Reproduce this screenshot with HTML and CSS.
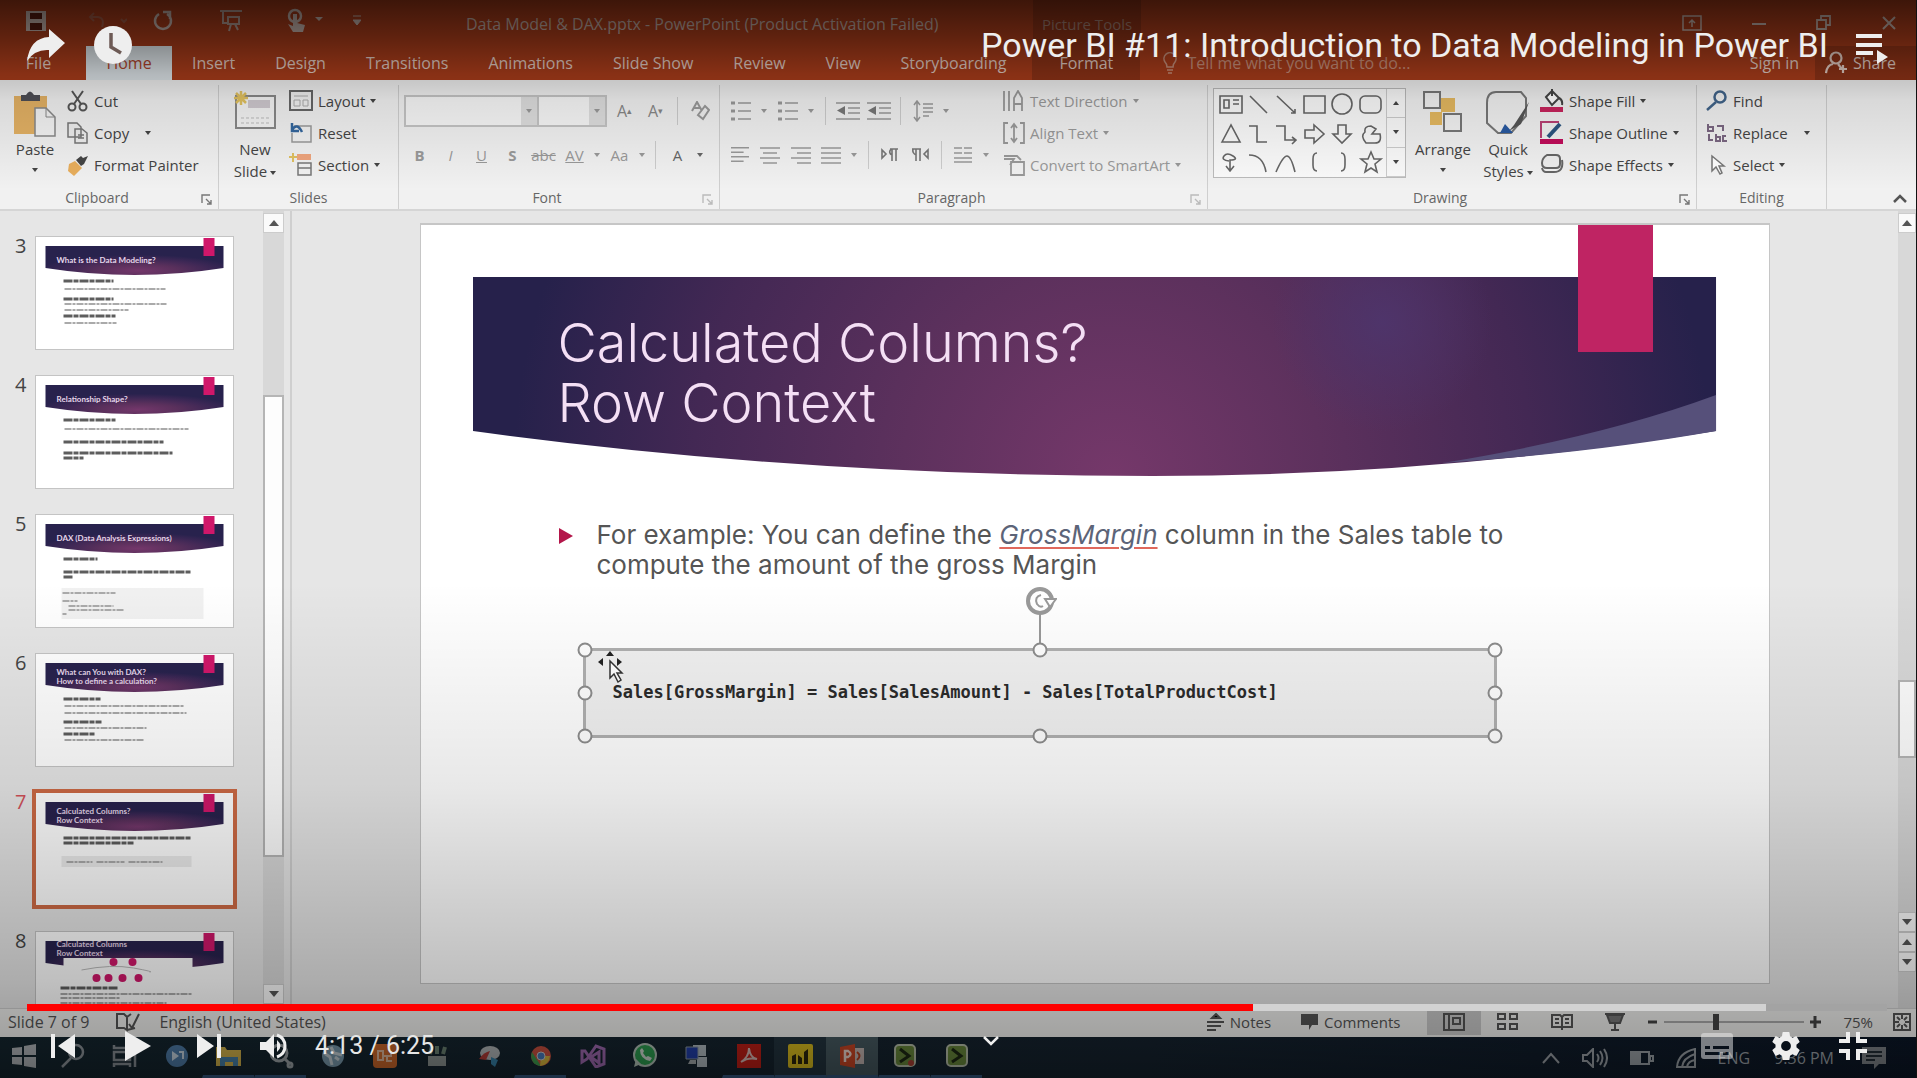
FILE: index.html
```html
<!DOCTYPE html>
<html lang="en">
<head>
<meta charset="utf-8">
<title>Power BI #11: Introduction to Data Modeling in Power BI</title>
<link rel="stylesheet" href="styles.css">
</head>
<body>
<svg class="defs" aria-hidden="true">
  <defs>
    <radialGradient id="plum" cx="0.52" cy="0.85" r="0.55">
      <stop offset="0" stop-color="#74376b"/><stop offset="0.4" stop-color="#5a305c"/><stop offset="0.75" stop-color="#3c2755"/><stop offset="1" stop-color="#28224d"/>
    </radialGradient>
    <radialGradient id="wide" gradientUnits="userSpaceOnUse" cx="640" cy="200" r="600">
      <stop offset="0" stop-color="#75386a"/><stop offset="0.35" stop-color="#5d315d"/><stop offset="0.7" stop-color="#432854"/><stop offset="1" stop-color="#26214b"/>
    </radialGradient>
    <radialGradient id="glow" gradientUnits="userSpaceOnUse" cx="910" cy="45" r="110">
      <stop offset="0" stop-color="#4e356c" stop-opacity=".9"/><stop offset="1" stop-color="#4e356c" stop-opacity="0"/>
    </radialGradient>
    <symbol id="mini" viewBox="0 0 196 112">
      <path d="M9 9H187V31Q98 45 9 31Z" fill="url(#plum)"/>
      <path d="M167 1h11v18h-11z" fill="#d0176a"/>
    </symbol>
    <symbol id="launch" viewBox="0 0 12 12"><path d="M1 9V1h8M5 5l5 5M10 6v4H6" fill="none" stroke="currentColor" stroke-width="1.4"/></symbol>
    <symbol id="lines" viewBox="0 0 20 20"><path d="M0 2h20M0 7h14M0 12h20M0 17h14" stroke="currentColor" stroke-width="1.6"/></symbol>
    <symbol id="bullets" viewBox="0 0 20 22"><path d="M0 3h4M0 11h4M0 19h4" stroke="currentColor" stroke-width="3"/><path d="M7 3h13M7 11h13M7 19h13" stroke="currentColor" stroke-width="1.6"/></symbol>
    <symbol id="indent" viewBox="0 0 24 20"><path d="M0 2h24M12 7h12M12 12h12M0 18h24" stroke="currentColor" stroke-width="1.6"/><path d="M9 5v9L1 9.500z" fill="#777"/></symbol>
  </defs>
</svg>
<main class="player">
<section class="frame" aria-label="PowerPoint window">
  <header class="titlebar">
    <div class="quick">
      <button aria-label="Save"><svg width="22" height="22"><path d="M1 1h20v20H1z" fill="#c9b5ae"/><path d="M5 3h12v6H5zM5 13h12v7H5z" fill="#571b0f"/></svg></button>
      <button aria-label="Undo"><svg width="40" height="20" fill="none" stroke="#a25a44" stroke-width="2"><path d="M3 6h8q7 1 4 10M7 2L3 6l4 4M34 8l3 3 3-3"/></svg></button>
      <button aria-label="Redo"><svg width="20" height="22" fill="none" stroke="#c9b5ae" stroke-width="2.500"><path d="M6 4a8 8 0 1 0 8 0M10 2h7v7"/></svg></button>
      <button aria-label="Slide show"><svg width="24" height="24" fill="none" stroke="#b59c93" stroke-width="2"><path d="M1 2h22M4 2v12h5M9 8h11v7H9zM12 15l-2 7M16 15l3 6"/></svg></button>
      <button aria-label="Touch mode"><svg width="38" height="26"><circle cx="10" cy="8" r="6" fill="none" stroke="#c9b5ae" stroke-width="2.500"/><path d="M8 6h4v9l8 2-2 7H8l-5-8 5 2z" fill="#c9b5ae"/><path d="M30 9h8l-4 4z" fill="#c9b5ae"/></svg></button>
      <button aria-label="Customize"><svg width="8" height="14"><path d="M0 2h8M0 6h8l-4 5z" fill="#c9b5ae" stroke="#c9b5ae"/></svg></button>
    </div>
    <p class="doc">Data Model &amp; DAX.pptx - PowerPoint (Product Activation Failed)</p>
    <p class="tools">Picture Tools</p>
    <div class="winbtns">
      <button aria-label="Ribbon options"><svg width="20" height="16" fill="none" stroke="#c9b5ae" stroke-width="1.500"><path d="M1 1h18v14H1zM10 12V5M7 8l3-3 3 3"/></svg></button>
      <button aria-label="Minimize"><svg width="14" height="16"><path d="M0 9h14" stroke="#c9b5ae" stroke-width="2"/></svg></button>
      <button aria-label="Restore"><svg width="16" height="16" fill="none" stroke="#c9b5ae" stroke-width="1.800"><path d="M1 5h9v9H1zM5 5V1h9v9h-4"/></svg></button>
      <button aria-label="Close"><svg width="14" height="14"><path d="M1 1l12 12M13 1L1 13" stroke="#c9b5ae" stroke-width="2"/></svg></button>
    </div>
  </header>
  <nav class="tabs">
    <button class="file">File</button><button class="home">Home</button><button>Insert</button><button>Design</button><button>Transitions</button><button>Animations</button><button>Slide Show</button><button>Review</button><button>View</button><button>Storyboarding</button><button class="format">Format</button>
    <button class="tell"><svg width="16" height="22" fill="none" stroke="currentColor" stroke-width="1.600"><path d="M5 15q0-3-2-5a6 6 0 1 1 10 0q-2 2-2 5zM5 18h6M6 21h4"/></svg>Tell me what you want to do...</button>
    <button class="signin">Sign in</button>
    <button class="share"><svg width="22" height="24" fill="none" stroke="currentColor" stroke-width="2.200"><circle cx="11" cy="7" r="5.500"/><path d="M1 22q1-8 7-9M13 13l4 5M18 14v8M14 18h8"/></svg>Share</button>
  </nav>

  <div class="ribbon">
    <section class="group clip">
      <div class="body">
        <button class="big"><svg width="44" height="46"><path d="M1 5h33v38H1z" fill="#e3b164"/><path d="M8 10V4h5q4-7 8 0h6v6z" fill="#4e4e55"/><path d="M22 17h11l9 9v19H22z" fill="#f3f3f3" stroke="#888" stroke-width="1.500"/><path d="M33 17v9h9" fill="none" stroke="#888"/></svg><span>Paste</span><i></i></button>
        <div class="stack">
          <button><svg width="22" height="22" fill="none" stroke="#555" stroke-width="2"><path d="M5 1l9 13M16 1L7 14"/><circle cx="5" cy="17" r="3.500"/><circle cx="16" cy="17" r="3.500"/></svg>Cut</button>
          <button><svg width="22" height="22" fill="#eee" stroke="#777" stroke-width="1.500"><path d="M1 1h9l4 4v10H1zM8 7h7l5 4v10H8z"/><path d="M11 13h6M11 16h6"/></svg>Copy<i class="far"></i></button>
          <button><svg width="22" height="22"><path d="M2 10l6-3 7 7-8 8-6-5z" fill="#e8ae5c"/><path d="M9 6l5 6 3-2 4-8-5 2-2-2z" fill="#444"/></svg>Format Painter</button>
        </div>
      </div>
      <h2>Clipboard</h2><button class="launch" aria-label="Clipboard options"><svg><use href="#launch"/></svg></button>
    </section>
    <section class="group slides">
      <div class="body">
        <button class="big"><svg width="44" height="40"><path d="M3 5h39v32H3z" fill="#f4f4f4" stroke="#888" stroke-width="2"/><path d="M15 9h22v8H15z" fill="#cfc9cf"/><path d="M8 27h30M8 32h30" stroke="#bbb" stroke-dasharray="3 2"/><path d="M8 0v14M1 7h14M3 2l10 10M13 2L3 12" stroke="#e2c25f" stroke-width="2.500"/></svg><span>New</span><span>Slide<i></i></span></button>
        <div class="stack">
          <button><svg width="24" height="22" fill="none" stroke="#666" stroke-width="2"><path d="M1 1h22v19H1z"/><path d="M5 6h14M5 10h6v6H5zM14 10h5v6h-5z" stroke="#aaa" stroke-width="1"/></svg>Layout<i></i></button>
          <button><svg width="24" height="22" fill="none"><path d="M5 4h17v16H3V11" stroke="#999" stroke-width="1.500"/><path d="M3 8q5-8 10 2M3 1v8h7" stroke="#33669d" stroke-width="2.500"/></svg>Reset</button>
          <button><svg width="24" height="24" fill="none"><path d="M8 1h14v6H8z" fill="#efa57e"/><path d="M9 10h13v12H9zM9 15h13" stroke="#777" stroke-width="1.500"/><path d="M4 0v9M0 4h8" stroke="#e0c060" stroke-width="2"/></svg>Section<i></i></button>
        </div>
      </div>
      <h2>Slides</h2>
    </section>
    <section class="group font">
      <div class="body rows">
        <div class="line top">
          <label class="combo face"><select aria-label="Font"><option></option></select><i></i></label><label class="combo size"><select aria-label="Font size"><option></option></select><i></i></label>
          <button class="tb grow">A<sup>▴</sup></button><button class="tb grow">A<sup>▾</sup></button><b class="sep"></b>
          <button class="tb" aria-label="Clear formatting"><svg width="20" height="20" fill="none" stroke="currentColor" stroke-width="2"><path d="M2 10L7 1l5 9M4 7h6M8 14l7-9 4 4-6 9z"/></svg></button>
        </div>
        <div class="line">
          <button class="tb"><strong>B</strong></button><button class="tb"><em>I</em></button><button class="tb"><u>U</u></button><button class="tb"><strong>S</strong></button><button class="tb"><s>abc</s></button><button class="tb"><u>AV</u></button><button class="dd" aria-label="Spacing"><i></i></button><button class="tb">Aa</button><button class="dd" aria-label="Case"><i></i></button><b class="sep"></b><button class="tb dark">A</button><button class="dd dark" aria-label="Colour"><i></i></button>
        </div>
      </div>
      <h2>Font</h2><button class="launch pale" aria-label="Font options"><svg><use href="#launch"/></svg></button>
    </section>
    <section class="group para">
      <div class="body">
        <div class="rows">
          <div class="line top">
            <button class="tb" aria-label="Bullets"><svg width="20" height="22"><use href="#bullets"/></svg></button><button class="dd" aria-label="Bullet styles"><i></i></button><button class="tb" aria-label="Numbering"><svg width="20" height="22"><use href="#bullets"/></svg></button><button class="dd" aria-label="Number styles"><i></i></button><b class="sep"></b><button class="tb" aria-label="Outdent"><svg width="24" height="20"><use href="#indent"/></svg></button><button class="tb" aria-label="Indent"><svg width="24" height="20"><use href="#indent"/></svg></button><b class="sep"></b><button class="tb" aria-label="Line spacing"><svg width="20" height="22"><path d="M4 2v18M1 5l3-4 3 4M1 17l3 4 3-4M10 4h10M10 8h10M10 12h10M10 16h6" fill="none" stroke="currentColor" stroke-width="1.500"/></svg></button><button class="dd" aria-label="Spacing options"><i></i></button>
          </div>
          <div class="line">
            <button class="tb" aria-label="Left"><svg width="20" height="18"><use href="#lines"/></svg></button><button class="tb" aria-label="Centre"><svg width="20" height="18" stroke="currentColor" stroke-width="1.600"><path d="M0 2h20M3 7h14M0 12h20M3 17h14"/></svg></button><button class="tb" aria-label="Right"><svg width="20" height="18" stroke="currentColor" stroke-width="1.600"><path d="M0 2h20M6 7h14M0 12h20M6 17h14"/></svg></button><button class="tb" aria-label="Justify"><svg width="20" height="18" stroke="currentColor" stroke-width="1.600"><path d="M0 2h20M0 7h20M0 12h20M0 17h20"/></svg></button><button class="dd" aria-label="Justify options"><i></i></button><b class="sep"></b><button class="tb" aria-label="Left to right"><svg width="18" height="16" fill="none" stroke="#777" stroke-width="1.600"><path d="M1 3v8l4-4zM9 2h8M11 2v12M15 2v12M11 8q-4-2-1-6"/></svg></button><button class="tb" aria-label="Right to left"><svg width="18" height="16" fill="none" stroke="#777" stroke-width="1.600"><path d="M17 3v8l-4-4zM1 2h9M5 2v12M9 2v12M5 8q-4-2-3-6"/></svg></button><b class="sep"></b><button class="tb" aria-label="Columns"><svg width="18" height="16" stroke="currentColor" stroke-width="1.600"><path d="M0 1h8M10 1h8M0 6h8M10 6h8M0 11h18M0 15h18"/></svg></button><button class="dd" aria-label="Column options"><i></i></button>
          </div>
        </div>
        <div class="stack">
          <button><svg width="22" height="22" fill="none" stroke="currentColor" stroke-width="1.800"><path d="M1 1v20M6 1v20M11 21V8l4-7 4 7v13M11 14h8"/></svg>Text Direction<i></i></button>
          <button><svg width="22" height="22" fill="none" stroke="currentColor" stroke-width="1.800"><path d="M5 1H1v20h4M17 1h4v20h-4M11 3v16M8 6l3-4 3 4M8 16l3 4 3-4"/></svg>Align Text<i></i></button>
          <button><svg width="22" height="22" fill="none" stroke="currentColor" stroke-width="1.800"><path d="M8 8h13v13H8zM1 2h13l4 4M1 5h10l-4 6"/></svg>Convert to SmartArt<i></i></button>
        </div>
      </div>
      <h2>Paragraph</h2><button class="launch pale" aria-label="Paragraph options"><svg><use href="#launch"/></svg></button>
    </section>
    <section class="group draw">
      <div class="body">
        <div class="gallery">
          <svg width="172" height="86" fill="none" stroke="#666" stroke-width="1.600">
            <path d="M6 7h22v17H6zM10 11h5v8h-5zM19 11h6M19 15h6M36 7l17 17M63 7l18 17M77 24h4v-4M90 7h21v17H90z"/><circle cx="128" cy="15" r="10"/><rect x="146" y="7" width="21" height="17" rx="5"/>
            <path d="M8 53l9-17 9 17zM35 37h8v16h10M62 37h9v14h11M78 48l4 3-4 4M91 41h9v-5l10 9-10 9v-5h-9zM124 36h8v9h5l-9 9-9-9h5zM166 45q2 9-5 9h-9q-6-7-1-11-1-6 6-6l5 3-4 5z"/>
            <path d="M15 72q-8-1-5-5t9 0-3 4v11M12 77l4 5 4-5M35 66q14 0 17 17M62 83q7-16 11-16t8 16M103 64q-4 0-4 6v6q0 6 4 6M127 64q4 0 4 6v6q0 6-4 6M157 63l3 7h7l-6 5 2 8-6-4-6 4 2-8-6-5h7z"/>
          </svg>
          <div class="gscroll"><button aria-label="Up"><i class="up"></i></button><button aria-label="Down"><i></i></button><button aria-label="More"><i></i></button></div>
        </div>
        <button class="big arrange"><svg width="40" height="42"><path d="M18 7h14v14H18zM7 21h12v13H7z" fill="#e4b860"/><path d="M1 1h16v16H1zM21 23h17v17H21z" fill="#f2f2f2" stroke="#777" stroke-width="2"/></svg><span>Arrange</span><i></i></button>
        <button class="big"><svg width="44" height="46"><path d="M1 12Q1 1 10 1h25l5 6v18L25 42H12L1 32z" fill="#f1f1f1" stroke="#777" stroke-width="2"/><path d="M43 11L28 34l-5 6 12-7z" fill="#555"/><path d="M14 42l5-9 8 9z" fill="#2959a0"/></svg><span>Quick</span><span>Styles<i></i></span></button>
        <div class="stack">
          <button><svg width="24" height="24"><path d="M6 8l6-6 7 7-7 7zM12 0v7M19 9q4 2 3 7" fill="#fff" stroke="#444" stroke-width="2"/><path d="M0 18h23v5H0z" fill="#c7245c"/></svg>Shape Fill<i></i></button>
          <button><svg width="24" height="24"><path d="M1 17V1h18" fill="none" stroke="#b84073" stroke-width="2"/><path d="M20 3L8 16" stroke="#2c5580" stroke-width="4"/><path d="M0 18h23v5H0z" fill="#c00d5a"/></svg>Shape Outline<i></i></button>
          <button><svg width="24" height="22" fill="#eee" stroke="#666" stroke-width="2"><path d="M7 1h9q4 0 4 4v5q0 4-4 4H7q-5 0-5-5t5-8z"/><path d="M22 6q2 12-8 12H6q-3 0-4-4" fill="none"/></svg>Shape Effects<i></i></button>
        </div>
      </div>
      <h2>Drawing</h2><button class="launch" aria-label="Drawing options"><svg><use href="#launch"/></svg></button>
    </section>
    <section class="group edit">
      <div class="body">
        <div class="stack">
          <button><svg width="22" height="22" fill="none" stroke="#41648a" stroke-width="2.500"><circle cx="14" cy="7" r="5.500"/><path d="M10 12l-9 8"/></svg>Find</button>
          <button><svg width="22" height="22" fill="none" stroke="#7b6782" stroke-width="2"><path d="M2 2v7h5V5H2M11 4h6v5M10 12v7h4v-4h-4M20 14h-3v5h4M3 12v6h4"/></svg>Replace<i class="far"></i></button>
          <button><svg width="22" height="22" fill="#fff" stroke="#777" stroke-width="1.500"><path d="M6 2v15l4-4 4 7 2-1-3-7h5z"/></svg>Select<i></i></button>
        </div>
      </div>
      <h2>Editing</h2>
    </section>
    <button class="collapse" aria-label="Collapse ribbon"><svg width="14" height="9"><path d="M1 8l6-6 6 6" fill="none" stroke="#555" stroke-width="2.500"/></svg></button>
  </div>

  <div class="work">
    <ol class="thumbs" start="3">
      <li><span>3</span><button class="thumb"><svg viewBox="0 0 196 112"><use href="#mini"/><text x="20" y="26">What is the Data Modeling?</text><g class="k"><path d="M27 44h50M27 62h50M27 79h52"/></g><g class="g"><path d="M28 52h101M28 67h102M28 73h64M28 86h52"/></g></svg></button></li>
      <li><span>4</span><button class="thumb"><svg viewBox="0 0 196 112"><use href="#mini"/><text x="20" y="26">Relationship Shape?</text><g class="k"><path d="M27 44h52M27 66h100M27 77h109M27 82h20"/></g><g class="g"><path d="M28 53h124"/></g></svg></button></li>
      <li><span>5</span><button class="thumb"><svg viewBox="0 0 196 112"><use href="#mini"/><text x="20" y="26">DAX (Data Analysis Expressions)</text><path d="M25 73h142v31H25z" fill="#f1f1f1"/><g class="k"><path d="M27 44h34M27 57h127M27 62h9"/></g><g class="g"><path d="M26 78h53M26 86h15M32 91h45M32 95h55M26 99h4"/></g></svg></button></li>
      <li><span>6</span><button class="thumb"><svg viewBox="0 0 196 112"><use href="#mini"/><text x="20" y="21">What can You with DAX?</text><text x="20" y="30">How to define a calculation?</text><g class="k"><path d="M27 45h37M27 68h38M27 80h31"/></g><g class="g"><path d="M28 52h119M28 59h122M28 74h82M28 86h80"/></g></svg></button></li>
      <li class="on"><span>7</span><button class="thumb"><svg viewBox="0 0 196 112"><use href="#mini"/><text x="20" y="21">Calculated Columns?</text><text x="20" y="30">Row Context</text><path d="M25 63h130v11H25z" fill="#ececec"/><g class="k"><path d="M27 45h128M27 50h70"/></g><g class="g"><path d="M30 69h26M60 69h28M92 69h34"/></g></svg></button></li>
      <li><span>8</span><button class="thumb"><svg viewBox="0 0 196 112"><use href="#mini"/><path d="M27 26h129v24H27z" fill="#fff"/><text x="20" y="15">Calculated Columns</text><text x="20" y="24">Row Context</text><path d="M45 38q30-6 52-2t16 4" fill="none" stroke="#bbb"/><g fill="#d0176a"><circle cx="77" cy="30" r="4"/><circle cx="96" cy="30" r="4"/><circle cx="60" cy="46" r="4"/><circle cx="72" cy="46" r="4"/><circle cx="86" cy="46" r="4"/><circle cx="102" cy="46" r="4"/></g><g class="k"><path d="M24 56h58"/></g><g class="g"><path d="M24 62h132M24 66h60M24 71h106"/></g></svg></button></li>
    </ol>
    <div class="vscroll left"><button aria-label="Scroll up"><i class="up"></i></button><span class="gap"></span><span class="grip"></span><span class="rest"></span><button aria-label="Scroll down"><i></i></button></div>
    <div class="stage">
      <article class="slide">
        <svg class="ribbon-mark" viewBox="0 0 75 127" aria-hidden="true"><path d="M0 0h75v127H0z" fill="#bf2463"/></svg>
        <header class="banner">
          <svg viewBox="0 0 1244 200" preserveAspectRatio="none" aria-hidden="true"><path d="M0 0H1244V154Q960 199 680 199Q330 199 0 154Z" fill="url(#wide)"/><path d="M0 0H1244V154Q960 199 680 199Q330 199 0 154Z" fill="url(#glow)"/><path d="M970 186Q1130 160 1244 118V154Q1120 176 970 186Z" fill="#56507a"/></svg>
          <h1>Calculated Columns?<br>Row Context</h1>
        </header>
        <ul class="points"><li>For example: You can define the <em>GrossMargin</em> column in the Sales table to compute the amount of the gross Margin</li></ul>
        <div class="picked">
          <code>Sales[GrossMargin] = Sales[SalesAmount] - Sales[TotalProductCost]</code>
          <svg class="rot" width="34" height="56" fill="none" stroke="#999"><path d="M17 26v30" stroke-width="2"/><circle cx="17" cy="14" r="12" stroke="#999" stroke-width="4" fill="#fff"/><path d="M18 8q-7 2-4 9 3 4 6 2" stroke-width="2"/><path d="M22 12h11l-6 8z" fill="#fff" stroke-width="2"/></svg>
          <b class="h tl"></b><b class="h tc"></b><b class="h tr"></b><b class="h ml"></b><b class="h mr"></b><b class="h bl"></b><b class="h bc"></b><b class="h br"></b>
          <svg class="cursor" width="28" height="34"><path d="M12 10v17l4-4 4 8 3-2-4-7h5z" fill="#fff" stroke="#333" stroke-width="1.500"/><path d="M12 0l4 5H8zM0 11l5-4v8zM24 11l-5-4v8z" fill="#222"/></svg>
        </div>
      </article>
    </div>
    <div class="vscroll right"><button aria-label="Previous"><i class="up"></i></button><span class="gap"></span><span class="grip"></span><span class="rest"></span><button aria-label="Next"><i></i></button><button aria-label="Previous slide"><i class="up"></i></button><button aria-label="Next slide"><i></i></button></div>
  </div>

  <footer class="status">
    <span>Slide 7 of 9</span>
    <svg class="spell" width="24" height="20" fill="none" stroke="#555" stroke-width="2"><path d="M1 2h7l3 3v13l-3-2H1zM11 5l4-3M13 12l3 4 7-14M11 18l8-2"/></svg>
    <span class="lang">English (United States)</span>
    <button class="notes"><svg width="17" height="18" stroke="#555" stroke-width="2"><path d="M5 5l4-4 4 4zM0 9h17M0 13h14M0 17h9"/></svg>Notes</button>
    <button class="comments"><svg width="17" height="18"><path d="M0 1h17v11h-6l-3 5v-5H0z" fill="#555"/></svg>Comments</button>
    <div class="views">
      <button class="on" aria-label="Normal"><svg width="22" height="18" fill="none" stroke="#555" stroke-width="2"><path d="M1 1h20v16H1zM6 1v16M10 5h7v6h-7z"/></svg></button>
      <button aria-label="Sorter"><svg width="22" height="18" fill="none" stroke="#555" stroke-width="2"><path d="M1 1h7v5H1zM13 1h7v5h-7zM1 11h7v5H1zM13 11h7v5h-7z"/></svg></button>
      <button aria-label="Reading"><svg width="22" height="18" fill="none" stroke="#555" stroke-width="2"><path d="M1 2h8l2 2 2-2h8v12H1zM11 4v13M4 6h4M4 10h4M14 6h4M14 10h4"/></svg></button>
      <button aria-label="Slide show"><svg width="22" height="18" fill="#777" stroke="#555" stroke-width="2"><path d="M0 1h20M2 2h16l-3 8H5zM10 10v6M6 17h8"/></svg></button>
    </div>
    <button class="zoombtn" aria-label="Zoom out"><svg width="12" height="12"><path d="M1 6h9" stroke="#444" stroke-width="3"/></svg></button>
    <input class="zoom" type="range" min="10" max="190" value="75" aria-label="Zoom">
    <button class="zoombtn" aria-label="Zoom in"><svg width="12" height="12"><path d="M1 6h11M6 0v12" stroke="#444" stroke-width="3"/></svg></button>
    <span class="pct">75%</span>
    <button class="fit" aria-label="Fit"><svg width="18" height="18" fill="none" stroke="#555" stroke-width="2"><path d="M1 1h16v16H1zM9 2v4M9 12v4M2 9h4M12 9h4M4 4l3 3M14 4l-3 3M4 14l3-3M14 14l-3-3"/></svg></button>
  </footer>

  <footer class="taskbar">
    <div class="apps">
      <button aria-label="Start"><svg width="24" height="24" fill="#b0b4b8"><path d="M0 4l10-1v8H0zM12 2l12-2v11H12zM0 13h10v8L0 20zM12 13h12v11l-12-2z"/></svg></button>
      <button aria-label="Search"><svg width="26" height="26" fill="none" stroke="#8b9298" stroke-width="2.500"><circle cx="16" cy="9" r="7"/><path d="M11 15L2 24"/></svg></button>
      <button aria-label="Task view"><svg width="26" height="24" fill="none" stroke="#858c92" stroke-width="2.500"><path d="M2 1v3h16V1M2 8h16v8H2zM2 23v-3h16v3M23 1v22"/></svg></button>
      <button aria-label="Help"><svg width="24" height="24"><circle cx="12" cy="12" r="11" fill="#4d7aa5"/><path d="M7 7l7 5-7 5z" fill="#c4d2dd"/><path d="M14 8h4v7" fill="none" stroke="#c4d2dd" stroke-width="2"/></svg></button>
      <button class="run" aria-label="Explorer"><svg width="26" height="22"><path d="M0 2h9l2 3h14v16H0z" fill="#cfb04a"/><path d="M4 12h18v9h-5v-4H9v4H4z" fill="#4680a6"/></svg></button>
      <button class="run" aria-label="Finder"><svg width="26" height="26" fill="none" stroke="#9ba2a6" stroke-width="3"><circle cx="11" cy="10" r="8"/><path d="M17 16l5 5"/><circle cx="22" cy="22" r="2"/></svg></button>
      <button aria-label="Globe"><svg width="24" height="24"><circle cx="12" cy="12" r="11" fill="#7898ab"/><path d="M3 9l6 4 2 8M10 3l3 6 8 2M14 13l4 3" stroke="#c3ced3" stroke-width="3" fill="none"/></svg></button>
      <button aria-label="Xampp"><svg width="24" height="24"><rect width="24" height="24" rx="4" fill="#c9662a"/><path d="M5 7h5v9H5zM10 12h8V7M14 12v5h5" stroke="#dcb69c" stroke-width="2" fill="none"/></svg></button>
      <button aria-label="Tools"><svg width="24" height="24"><path d="M3 12h18v10H3z" fill="#8b9391"/><path d="M5 10l2-8M12 10V2M18 10l2-7" stroke="#687f70" stroke-width="4"/></svg></button>
      <button aria-label="Snip"><svg width="24" height="24"><ellipse cx="13" cy="9" rx="10" ry="7" fill="#aeb3b5"/><path d="M2 15q5-7 11-8l-4 9z" fill="#ad3b36"/><path d="M14 13l7 3-3 7-4-3z" fill="#357fa6"/></svg></button>
      <button class="run" aria-label="Chrome"><svg width="22" height="22"><circle cx="11" cy="11" r="10" fill="#c8503f"/><path d="M2 7l9 14A10 10 0 0 1 2 7z" fill="#3d9a4d"/><path d="M11 11h9a10 10 0 0 1-10 10z" fill="#d6b53c"/><circle cx="11" cy="11" r="4" fill="#4779b9" stroke="#ccc"/></svg></button>
      <button aria-label="Visual Studio"><svg width="26" height="24" fill="none" stroke="#9d68ae" stroke-width="3"><path d="M2 7v11l5-3 9-13 8 3v15l-8 3L5 7zM19 8l-8 5 8 6z"/></svg></button>
      <button aria-label="WhatsApp"><svg width="26" height="26"><circle cx="13" cy="12" r="11" fill="#2c9b4f" stroke="#b1c1b6" stroke-width="2"/><path d="M2 24l2-8 5 5z" fill="#b1c1b6"/><path d="M8 7q0 9 10 11l2-3-4-2-2 1-3-4 1-2-2-3z" fill="#cdd8d0"/></svg></button>
      <button aria-label="Remote"><svg width="26" height="26"><path d="M9 2h13v11H9zM13 14h10v10H13z" fill="#aeb8be"/><path d="M2 4h12v12H2z" fill="#213ea7" stroke="#8a96a0"/><path d="M6 17h6v4H4z" fill="#a2a8aa"/></svg></button>
      <button class="run" aria-label="Acrobat"><svg width="24" height="24"><path d="M0 0h24v24H0z" fill="#bd1e16"/><path d="M4 18Q12 13 12 4q1 10 8 11-9-2-16 3z" fill="none" stroke="#d5b7b3" stroke-width="2"/></svg></button>
      <button class="run lit" aria-label="Power BI"><svg width="26" height="24"><rect width="25" height="24" rx="2" fill="#d6b91e"/><path d="M4 20V12l4-2v10M10 20v-9l4 3v6M16 20V8l4-3v15" fill="#2c250c"/></svg></button>
      <button class="run lit now" aria-label="PowerPoint"><svg width="26" height="24"><path d="M12 4h12v16H12z" fill="#c1b3af"/><path d="M0 3l15-3v24L0 21z" fill="#c84524"/><path d="M5 18V7h3q5 3 0 6H5" fill="none" stroke="#ebd5cd" stroke-width="2.500"/><path d="M17 8q5 4 0 8" fill="none" stroke="#b33e20" stroke-width="2"/></svg></button>
      <button class="run" aria-label="Camtasia recorder"><svg width="22" height="24"><rect x="1" y="1" width="20" height="21" rx="4" fill="#66853a" stroke="#b5bda8" stroke-width="2"/><path d="M6 5l9 7-9 6" fill="none" stroke="#1d2813" stroke-width="3"/><circle cx="17" cy="19" r="3" fill="#a53e32"/></svg></button>
      <button class="run" aria-label="Camtasia"><svg width="22" height="24"><rect x="1" y="1" width="20" height="21" rx="4" fill="#66853a" stroke="#b5bda8" stroke-width="2"/><path d="M6 5l9 7-9 6" fill="none" stroke="#1d2813" stroke-width="3"/></svg></button>
    </div>
    <div class="tray">
      <svg width="18" height="12" fill="none" stroke="currentColor" stroke-width="2"><path d="M1 11l8-9 8 9"/></svg>
      <svg width="26" height="20" fill="none" stroke="currentColor" stroke-width="2"><path d="M1 7h4l6-6v18l-6-6H1zM15 6q3 4 0 8M18 3q5 7 0 14M22 1q6 9 0 18"/></svg>
      <svg width="24" height="16" fill="none" stroke="currentColor" stroke-width="2"><path d="M1 2h18v12H1zM20 6h3v5h-3z"/><path d="M3 4h7v8H3z" fill="currentColor"/></svg>
      <svg width="20" height="20" fill="none" stroke="currentColor" stroke-width="2"><path d="M1 19Q2 5 19 1v18zM6 19Q7 10 19 6M11 19q1-6 8-7"/></svg>
      <span class="eng">ENG</span><span class="clock">9:36 PM</span>
      <svg width="24" height="24"><path d="M0 1h24v17h-7l-5 5v-5H0z" fill="#7d8287"/><path d="M4 6h16M4 10h16M4 14h9" stroke="#222c34" stroke-width="2"/></svg>
    </div>
  </footer>
</section>

<div class="overlay">
  <header class="head">
    <button aria-label="Share"><svg width="38" height="32"><path d="M22 0l16 14-16 15v-8Q8 20 0 32 3 9 22 8z"/></svg></button>
    <button aria-label="Watch later"><svg width="38" height="38"><circle cx="19" cy="19" r="19"/><path d="M17 7v14l10 6" fill="none" stroke="#6d5a55" stroke-width="3.500"/></svg></button>
    <a href="#video">Power BI #11: Introduction to Data Modeling in Power BI</a>
    <button aria-label="Playlist"><svg width="32" height="32"><path d="M0 1h26v4H0zM0 10h26v4H0zM0 18h17v4H0zM21 17l11 7-11 7z"/></svg></button>
  </header>
  <div class="foot">
    <input class="seek" type="range" min="0" max="385" value="253" aria-label="Seek">
    <div class="controls">
      <button aria-label="Previous"><svg width="24" height="24"><path d="M0 0h4v24H0zM24 0v24L7 12z"/></svg></button>
      <button class="play" aria-label="Play"><svg width="26" height="30"><path d="M0 0l26 15L0 30z"/></svg></button>
      <button aria-label="Next"><svg width="24" height="24"><path d="M20 0h4v24h-4zM0 0l17 12L0 24z"/></svg></button>
      <button class="vol" aria-label="Mute"><svg width="28" height="26"><path d="M0 9h6l8-8v24l-8-8H0zM17 7q7 6 0 12z"/><path d="M17 2q8 3 8 11t-8 11" fill="none" stroke="#eee" stroke-width="3"/></svg></button>
      <span class="time">4:13 / 6:25</span>
      <button class="more" aria-label="More videos"><svg width="16" height="10"><path d="M1 1l7 7 7-7" fill="none" stroke="#eee" stroke-width="2.500"/></svg></button>
      <button class="cc" aria-label="Subtitles"><svg width="32" height="26"><path fill-rule="evenodd" d="M3 0h26q3 0 3 3v20q0 3-3 3H3q-3 0-3-3V3q0-3 3-3zM4 13v3h5v-3zM12 13v3h16v-3zM4 19v3h15v-3zM22 19v3h6v-3z"/></svg></button>
      <button aria-label="Settings"><svg width="28" height="28" viewBox="2 2 20 20"><path d="M19.430 12.980c.04-.32.07-.64.07-.98s-.03-.66-.07-.98l2.110-1.650c.19-.15.24-.42.12-.64l-2-3.460c-.12-.22-.39-.3-.61-.22l-2.490 1c-.52-.4-1.080-.73-1.690-.98l-.38-2.650C14.460 2.180 14.250 2 14 2h-4c-.25 0-.46.18-.49.42l-.38 2.650c-.61.25-1.170.59-1.690.98l-2.490-1c-.23-.09-.49 0-.61.22l-2 3.460c-.13.22-.07.49.12.64l2.110 1.650c-.04.32-.07.65-.07.98s.03.66.07.98l-2.110 1.650c-.19.15-.24.42-.12.64l2 3.460c.12.22.39.3.61.22l2.490-1c.52.4 1.080.73 1.690.98l.38 2.650c.03.24.24.42.49.42h4c.25 0 .46-.18.49-.42l.38-2.650c.61-.25 1.170-.59 1.690-.98l2.490 1c.23.09.49 0 .61-.22l2-3.460c.12-.22.07-.49-.12-.64zM12 15.500a3.500 3.500 0 1 1 0-7 3.500 3.500 0 0 1 0 7z"/></svg></button>
      <button aria-label="Exit full screen"><svg width="28" height="28"><path d="M7 0h4v11H0V7h7zM17 0h4v7h7v4H17zM0 17h11v11H7v-7H0zM17 17h11v4h-7v7h-4z"/></svg></button>
    </div>
  </div>
</div>
</main>
</body>
</html>
```
FILE: styles.css
```css
* { box-sizing: border-box; }
body { margin: 0; background: #000; font: 16px/20px "Open Sans", "Noto Sans", sans-serif; }
h1, h2, p, ol, ul { margin: 0; padding: 0; font-weight: 400; list-style: none; }
button { border: 0; padding: 0; background: none; color: inherit; font: inherit; display: flex; align-items: center; white-space: nowrap; }
svg { display: block; flex: none; }
i { display: inline-block; flex: none; border: 3px solid transparent; border-top: 4px solid currentColor; border-bottom: 0; }
i.up { border-bottom: 4px solid currentColor; border-top: 0; }
.defs { position: absolute; width: 0; height: 0; }

.player { position: relative; height: 100vh; overflow: hidden; border-right: 1px solid #111; }
.frame { height: 100%; display: flex; flex-direction: column; color: #444; }

/* title bar and tabs */
.titlebar { height: 46px; background: #a93c1a; display: flex; color: #c4aca4; }
.quick { display: flex; align-items: center; width: 466px; padding: 0 0 4px 25px; gap: 30px; }
.quick button:nth-child(2) { margin: 0 0 0 10px; }
.quick button:nth-child(3) { margin-left: -4px; }
.quick button:nth-child(4) { margin-left: 16px; }
.quick button:nth-child(5) { margin-left: 12px; }
.doc { width: 567px; padding-top: 14px; white-space: nowrap; }
.tools { width: 108px; padding-top: 14px; font-size: 15px; text-align: center; background: #8d3216; color: #a67f72; }
.winbtns { margin-left: auto; display: flex; align-items: center; gap: 50px; padding-right: 20px; }
.tabs { height: 34px; background: #a93c1a; display: flex; color: #e4cdc4; }
.tabs button { padding: 0 20px; justify-content: center; }
.tabs .file { width: 86px; padding: 0 9px 0 0; }
.tabs .home { width: 86px; background: #dfe6ea; color: #b0442c; }
.tabs .format { width: 108px; background: #8d3216; margin-left: 6px; padding: 0; }
.tabs .tell { gap: 9px; padding: 0 0 0 22px; color: #c98f7a; }
.tabs .signin { margin-left: auto; padding: 0 16px 0 0; }
.tabs .share { background: #8d3216; padding: 0 20px 0 10px; gap: 6px; }

/* ribbon */
.ribbon { height: 131px; background: #f1f1f1; border-bottom: 2px solid #d5d5d5; display: flex; padding-top: 5px; font-size: 15px; }
.group { position: relative; border-right: 1px solid #cfcfcf; display: flex; flex-direction: column; flex: none; }
.group h2 { font-size: 14px; line-height: 20px; padding: 7px 24px 0 0; text-align: center; color: #666; }
.slides h2, .edit h2 { padding-right: 0; }
.launch { position: absolute; right: 5px; bottom: 3px; color: #777; }
.launch svg { width: 12px; height: 12px; }
.pale { color: #bbb; }
.body { display: flex; height: 96px; }
.clip { width: 219px; }
.slides { width: 180px; }
.font { width: 321px; color: #999; }
.para { width: 488px; color: #999; }
.draw { width: 489px; }
.edit { width: 130px; }
.big { flex-direction: column; width: 46px; margin-left: 12px; padding-top: 6px; line-height: 22px; }
.big svg { height: 46px; margin-bottom: 1px; }
.big > i { margin-top: 8px; }
.big span i { margin-left: 3px; vertical-align: middle; }
.stack { display: grid; grid-template-rows: repeat(3, 32px); margin-left: 9px; }
.slides .big { margin-left: 13px; } .slides .stack { margin-left: 11px; }
.stack button { gap: 5px; }
.stack .far { margin-left: 11px; }
.rows { display: flex; flex-direction: column; padding-left: 5px; }
.line { height: 36px; display: flex; align-items: center; }
.line.top { height: 52px; }
.tb { width: 31px; justify-content: center; font-size: 15px; }
.tb sup { font-size: 9px; }
.grow { font-size: 16px; color: #888; }
.dark { color: #666; }
.dd { width: 16px; justify-content: center; }
.font .dd { width: 14px; }
.sep { width: 1px; height: 28px; margin: 0 6px; background: #ccc; }
.combo { height: 32px; border: 2px solid #c4c4c4; background: linear-gradient(90deg, #f7f7f7 calc(100% - 16px), #dedede 0); display: flex; align-items: center; }
.combo select { flex: 1; min-width: 0; height: 28px; border: 0; background: none; appearance: none; }
.combo i { border-width: 4px 3px 0; margin: 0 5px; }
.face { width: 135px; }
.size { width: 68px; border-left: 0; margin-right: 2px; }
.para .rows { width: 274px; }
.gallery { margin: 3px 0 0 5px; width: 193px; height: 90px; border: 1px solid #bbb; background: #fafafa; display: flex; }
.gscroll { width: 20px; display: grid; border-left: 1px solid #ccc; }
.gscroll button { justify-content: center; border-bottom: 1px solid #ccc; }
.arrange { width: 60px; margin-left: 7px; }
.draw .stack { margin-left: 9px; }
.collapse { margin-left: auto; align-self: flex-end; padding: 0 9px 6px 0; }

/* workspace */
.work { flex: 1; min-height: 0; display: flex; background: #e6e6e6; overflow: hidden; }
.thumbs { width: 263px; padding: 25px 0 0 15px; display: flex; flex-direction: column; gap: 25px; }
.thumbs li { display: flex; height: 114px; flex: none; font-size: 20px; }
.thumbs span { width: 20px; }
.thumb { width: 199px; height: 114px; background: #fff; border: 1px solid #c4c4c4; }
.thumb svg { width: 100%; height: 100%; }
.thumb text { font: 700 8px "Lato", sans-serif; fill: #e6d6ea; }
.on .thumb { outline: 4px solid #cd6a45; outline-offset: -1px; }
.thumbs .on span { color: #d2515a; }
.k { stroke: #5d5d5d; stroke-width: 3; stroke-dasharray: 9 1 5 1; }
.g { stroke: #aaa; stroke-width: 2; stroke-dasharray: 7 1 3 1; }
.vscroll { display: flex; flex-direction: column; background: #d8d8d8; width: 21px; padding: 2px 0 4px; color: #555; }
.vscroll button { height: 20px; justify-content: center; background: #fafafa; border: 1px solid #ccc; }
.vscroll i { border-width: 6px 5px 0; }
.vscroll i.up { border-width: 0 5px 6px; }
.grip { background: #fdfdfd; border: 2px solid #b5b5b5; flex: 460; }
.left .gap { flex: 162; } .left .rest { flex: 127; }
.right { width: 18px; padding-bottom: 36px; }
.right .gap { flex: 446; } .right .grip { flex: 74; } .right .rest { flex: 154; }
.stage { flex: 1; margin-left: 6px; border-left: 2px solid #cfcfcf; padding-top: 12px; display: flex; justify-content: center; align-items: flex-start; }
.slide { position: relative; width: 84%; aspect-ratio: 1352 / 763; background: #fff; border: 1px solid #c6c6c6; border-top: 2px solid #c6c6c6; padding: 52px 52px 0 52px; }
.ribbon-mark { position: absolute; z-index: 1; top: 0; right: 116px; width: 75px; }
.banner { display: grid; }
.banner > * { grid-area: 1 / 1; }
.banner svg { width: 100%; height: 200px; }
.banner h1 { padding: 36px 0 0 84px; font: 300 54px/60px "Inter", sans-serif; color: #f4dff5; }
.points { padding: 43px 190px 0 123px; font: 400 26px/30px "Inter", sans-serif; color: #555; }
.points li { position: relative; }
.points li::before { content: ""; position: absolute; left: -37px; top: 8px; border: 8px solid transparent; border-left: 14px solid #b3164a; border-right: 0; }
.points em { text-decoration: underline #e0685c 2px; text-underline-offset: 3px; color: #5c6478; }
.picked { position: relative; margin: 68px 220px 0 110px; height: 90px; border: 3px solid #b0b0b0; background: #f1f1f1; padding: 28px 26px; }
.picked code { font: 700 17px/26px "DejaVu Sans Mono", "Liberation Mono", monospace; color: #2b2b2b; white-space: nowrap; }
.h { position: absolute; width: 15px; height: 15px; border: 2px solid #8d8d8d; border-radius: 50%; background: #fff; transform: translate(-50%, -50%); }
.tl, .tc, .tr { top: -1px; } .ml, .mr { top: 50%; } .bl, .bc, .br { top: calc(100% + 1px); }
.tl, .ml, .bl { left: -1px; } .tc, .bc { left: 50%; } .tr, .mr, .br { left: calc(100% + 1px); }
.rot { position: absolute; left: calc(50% - 17px); bottom: 100%; margin-bottom: 8px; }
.cursor { position: absolute; left: 12px; top: 0; }

/* status bar */
.status { height: 29px; background: #f0f0ee; border-top: 1px solid #cfcfcf; display: flex; align-items: center; padding: 0 5px 3px 8px; white-space: nowrap; color: #555; }
.spell { margin-left: 27px; }
.lang { margin-left: 19px; }
.status button { font-size: 15px; }
.notes { margin-left: auto; gap: 6px; } .comments { margin-left: 30px; gap: 6px; }
.views { display: flex; margin: 0 4px 0 27px; }
.views button { width: 54px; height: 26px; justify-content: center; }
.views .on { background: #c9c9c9; }
input[type=range] { appearance: none; margin: 0; background: none; }
input.zoom { width: 140px; height: 18px; margin: 0 5px; background: linear-gradient(#aaa, #aaa) center / 100% 2px no-repeat; }
.zoom::-webkit-slider-thumb { appearance: none; width: 6px; height: 16px; background: #444; }
.pct { margin: 0 20px 0 22px; font-size: 15px; }

/* taskbar */
.taskbar { height: 41px; background: linear-gradient(100deg, #14252e, #15222e 60%, #0b1626); display: flex; color: #9aa0a6; }
.apps { display: flex; }
.apps button { width: 52px; justify-content: center; border-bottom: 3px solid transparent; border-left: 1px solid transparent; }
.apps button:first-child { width: 46px; }
.apps .run { border-bottom-color: #345780; }
.apps .lit { background: #22333e; }
.apps .now { background: #45585f; }
.tray { margin-left: auto; display: flex; align-items: center; gap: 22px; padding-right: 30px; }
.tray .clock { margin: 0 6px 0 2px; }

/* player controls over the video */
.overlay { position: absolute; inset: 0; display: flex; flex-direction: column; justify-content: space-between; background:
  linear-gradient(rgba(0,0,0,.64), rgba(0,0,0,.42) 40px, rgba(0,0,0,.2) 74px, rgba(0,0,0,.1) 100px, transparent 190px),
  linear-gradient(transparent 54%, rgba(0,0,0,.09) 73%, rgba(0,0,0,.25) 91%, rgba(0,0,0,.32) 96%, rgba(0,0,0,.45)); }
.overlay button { fill: #eee; }
.head { display: flex; align-items: center; height: 90px; padding: 0 28px 0 27px; }
.head button:nth-child(2) { margin-left: 29px; }
.head a { margin-left: auto; color: #eee; font: 34px/40px Roboto, sans-serif; text-decoration: none; white-space: nowrap; }
.head a + button { margin-left: 28px; padding-top: 8px; }
.foot { padding: 0 29px 0 27px; }
input.seek { display: block; width: 100%; height: 7px; background: linear-gradient(90deg, red 65.9%, #d2d2d2 65.9% 93.5%, #a3a3a3 93.5%); }
.seek::-webkit-slider-thumb { appearance: none; width: 0; height: 0; }
.controls { display: flex; align-items: center; height: 67px; padding: 3px 20px 0 24px; }
.controls .play { margin: 0 46px 0 50px; }
.vol { margin: 0 27px 0 39px; }
.time { font: 25px/30px Roboto, sans-serif; color: #e6e6e6; }
.more { position: absolute; left: calc(50% + 25px); bottom: 32px; }
.cc { margin-left: auto; opacity: .5; }
.controls .cc ~ button { margin-left: 39px; }
```
